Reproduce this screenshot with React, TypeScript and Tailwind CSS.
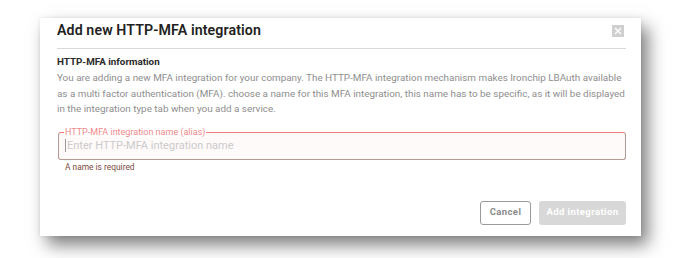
import React from "react";

export default function App() {
  return (
    <div
      className="w-[686px] h-[258px] bg-white pt-[18px] pl-[40px]"
      style={{ fontFamily: "Roboto, 'Liberation Sans', sans-serif" }}
    >
      <div className="w-[601px] h-[218px] bg-white pl-[17px] pr-[15px] flex flex-col shadow-[7px_9px_16px_rgba(0,0,0,0.5),0_0_4px_rgba(0,0,0,0.08)]">
        <div className="h-[24px] flex items-center justify-between">
          <div className="text-[14.2px] leading-[24px] font-semibold text-[#222] tracking-[0.1px]">
            Add new HTTP-MFA integration
          </div>
          <div className="w-[12px] h-[12px] bg-[#cfcfcf] flex items-center justify-center mr-[2px] mt-[1px]">
            <svg width="8" height="8" viewBox="0 0 8 8">
              <path d="M1 1L7 7M7 1L1 7" stroke="#fff" strokeWidth="1.4" />
            </svg>
          </div>
        </div>
        <div className="mt-[6px] h-px bg-[#d9d9d9]" />
        <div className="mt-[5px] text-[9.8px] leading-[16px] font-bold text-[#2a2a2a]">
          HTTP-MFA information
        </div>
        <div className="text-[9.9px] leading-[15.5px] text-[#8e8e8e] whitespace-nowrap">
          <div>
            You are adding a new MFA integration for your company. The HTTP-MFA integration mechanism makes Ironchip LBAuth available
          </div>
          <div>
            as a multi factor authentication (MFA). choose a name for this MFA integration, this name has to be specific, as it will be displayed
          </div>
          <div>in the integration type tab when you add a service.</div>
        </div>
        <div className="relative mt-[15px] ml-[1px] h-[28px] rounded-[3px] border border-[#b39a92] border-t-[#ee7b7b] bg-[#fffafa] flex items-center pl-[6px]">
          <span className="absolute -top-[6px] left-[5px] bg-white px-[1px] text-[9px] leading-[10px] text-[#ef8a8a]">
            HTTP-MFA integration name (alias)
          </span>
          <span className="w-px h-[13px] bg-[#999] mr-[1px]" />
          <span className="text-[11px] leading-[16px] text-[#cacaca]">
            Enter HTTP-MFA integration name
          </span>
        </div>
        <div className="mt-[1px] pl-[8px] text-[8.4px] leading-[12px] text-[#7a4a42]">
          A name is required
        </div>
        <div className="mt-[28px] flex justify-end gap-[8px]">
          <button className="w-[51px] h-[24px] rounded-[3px] border border-[#9a9a9a] bg-white text-[9.5px] font-bold text-[#8a8a8a] tracking-[0.4px]">
            Cancel
          </button>
          <button className="w-[87px] h-[24px] rounded-[3px] bg-[#d8d8d8] text-[9.5px] font-bold text-white tracking-[0.4px]">
            Add integration
          </button>
        </div>
      </div>
    </div>
  );
}
